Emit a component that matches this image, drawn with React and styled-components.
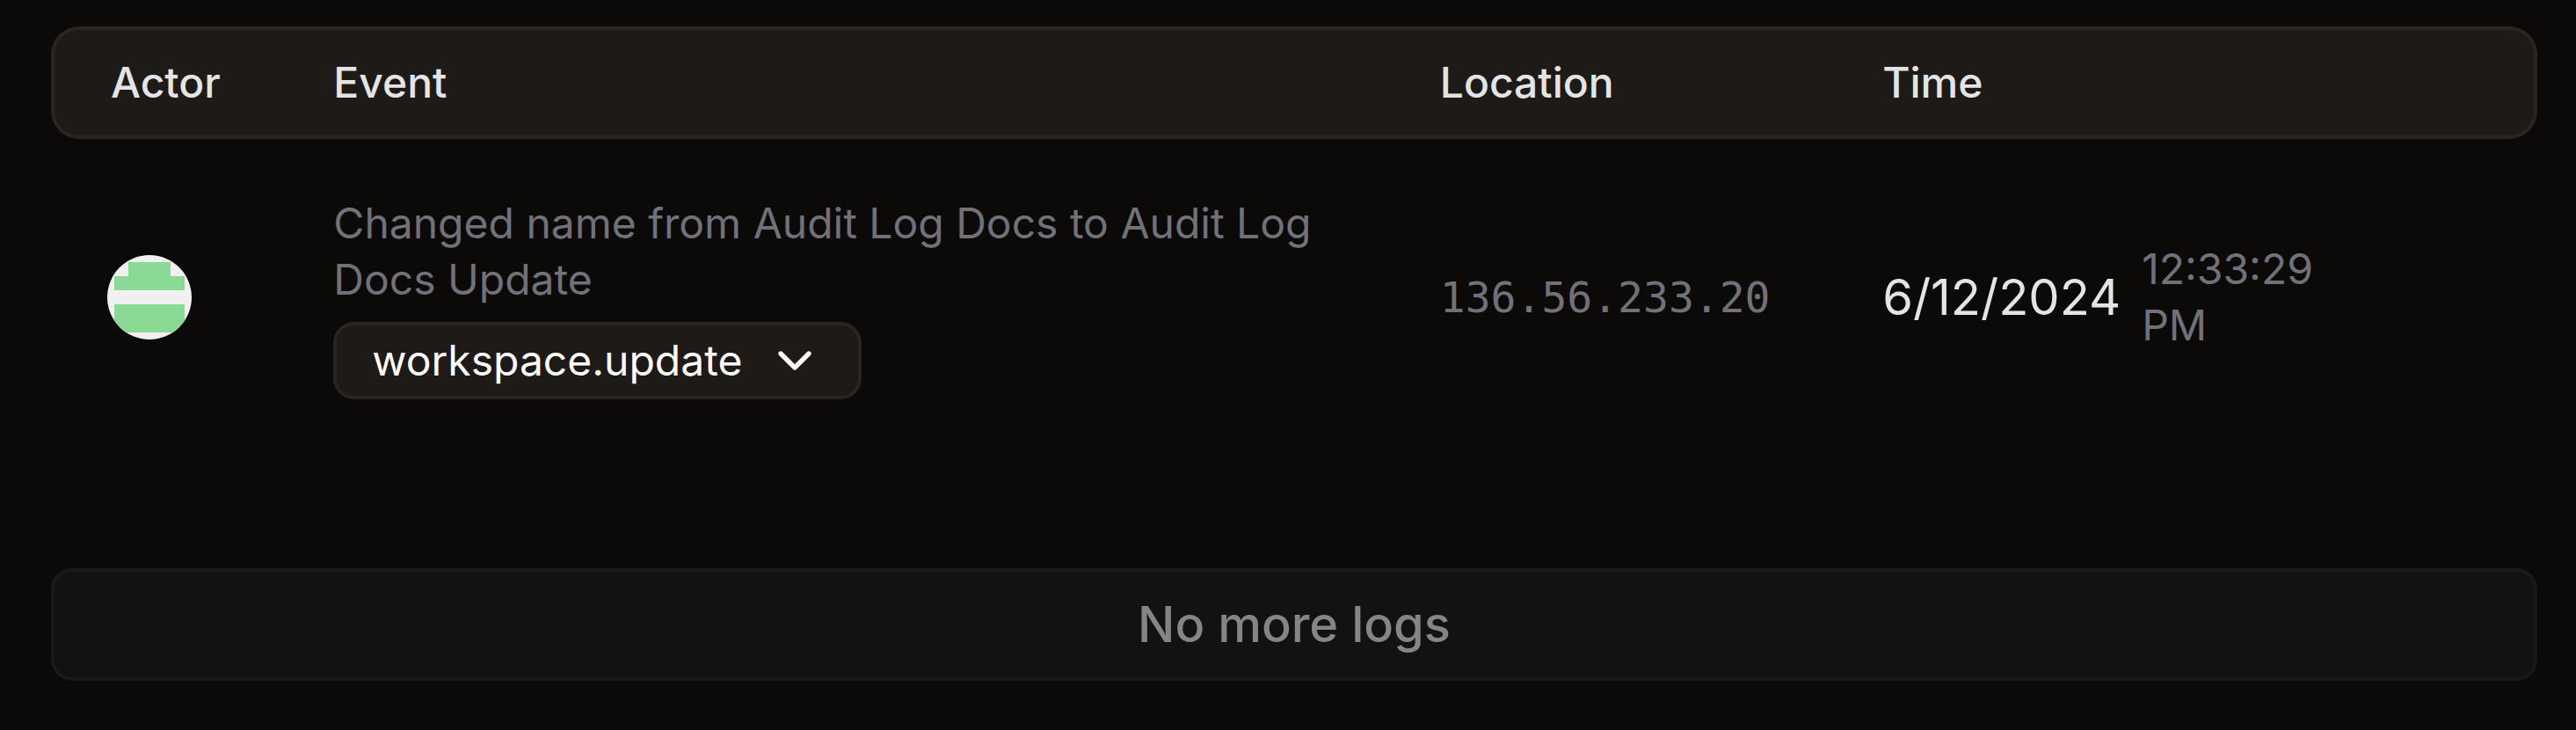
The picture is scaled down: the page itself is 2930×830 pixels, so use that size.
import React, { useState } from 'react';
import styled, { css, createGlobalStyle } from 'styled-components';
import { ChevronDown } from 'lucide-react';

const colors = {
  page: '#0c0a09',
  panel: '#1d1a17',
  border: '#292524',
  text: '#e4e4e7',
  muted: '#71717a',
};

const panelStyle = css`
  background: ${colors.panel};
  border: 4px solid ${colors.border};
`;

const GlobalStyle = createGlobalStyle`
  * {
    box-sizing: border-box;
  }

  body {
    margin: 0;
    background: ${colors.page};
    color: ${colors.text};
    font-family: Inter, 'Liberation Sans', sans-serif;
    font-size: 48px;
    line-height: 64px;
  }
`;

const Root = styled.main`
  display: flex;
  flex-direction: column;
  gap: 128px;
  padding: 30px 44px 56px 58px;
`;

const LogTable = styled.table`
  width: 100%;
  table-layout: fixed;
  border-collapse: separate;
  border-spacing: 0;
`;

const Column = styled.col`
  width: ${({ $width }) => $width};
`;

const HeaderCell = styled.th`
  ${panelStyle};
  height: 128px;
  padding: 0 64px;
  border-left-width: 0;
  border-right-width: 0;
  font-weight: 500;
  text-align: left;

  &:first-child {
    border-left-width: 4px;
    border-radius: 32px 0 0 32px;
  }

  &:last-child {
    border-right-width: 4px;
    border-radius: 0 32px 32px 0;
  }
`;

const Cell = styled.td`
  padding: 64px;
  vertical-align: middle;
`;

const Avatar = styled.svg`
  display: block;
  width: 96px;
  height: 96px;
  border-radius: 50%;
  background: #f0f0f0;
`;

const EventContent = styled.div`
  display: flex;
  flex-direction: column;
  align-items: flex-start;
  gap: 16px;
`;

const Description = styled.p`
  margin: 0;
  color: ${colors.muted};
`;

const EventButton = styled.button`
  ${panelStyle};
  display: flex;
  align-items: center;
  gap: 28px;
  padding: 8px 40px;
  border-radius: 24px;
  color: #ffffff;
  font: inherit;
  cursor: pointer;
`;

const IpAddress = styled.span`
  color: ${colors.muted};
  font-family: 'DejaVu Sans Mono', monospace;
`;

const Timestamp = styled.div`
  display: flex;
  align-items: center;
  gap: 24px;
`;

const DateText = styled.span`
  font-size: 56px;
`;

const TimeText = styled.span`
  color: ${colors.muted};
`;

const LoadMoreButton = styled.button`
  width: 100%;
  padding: 28px 64px;
  background: #141211;
  border: 4px solid #1b1918;
  border-radius: 24px;
  color: #868584;
  font: inherit;
  font-size: 56px;
  font-weight: 500;
`;

const logs = [
  {
    id: 1,
    description: 'Changed name from Audit Log Docs to Audit Log Docs Update',
    event: 'workspace.update',
    location: '136.56.233.20',
    date: '6/12/2024',
    time: '12:33:29 PM',
  },
];

function ActorAvatar() {
  return (
    <Avatar viewBox="0 0 96 96" role="img" aria-label="Actor">
      <path fill="#8ad994" d="M24 8h48v16h16v16H8V24h16zM8 56h80v32H8z" />
    </Avatar>
  );
}

function LogRow({ log }) {
  const [isOpen, setIsOpen] = useState(false);

  return (
    <tr>
      <Cell>
        <ActorAvatar />
      </Cell>
      <Cell>
        <EventContent>
          <Description>{log.description}</Description>
          <EventButton type="button" aria-expanded={isOpen} onClick={() => setIsOpen(!isOpen)}>
            {log.event}
            <ChevronDown size={64} aria-hidden="true" />
          </EventButton>
        </EventContent>
      </Cell>
      <Cell>
        <IpAddress>{log.location}</IpAddress>
      </Cell>
      <Cell>
        <Timestamp>
          <DateText>{log.date}</DateText>
          <TimeText>{log.time}</TimeText>
        </Timestamp>
      </Cell>
      <Cell />
    </tr>
  );
}

export default function App() {
  return (
    <>
      <GlobalStyle />
      <Root>
        <LogTable>
          <colgroup>
            <Column $width="9.1%" />
            <Column $width="44.5%" />
            <Column $width="17.8%" />
            <Column $width="17.8%" />
            <Column />
          </colgroup>
          <thead>
            <tr>
              <HeaderCell scope="col">Actor</HeaderCell>
              <HeaderCell scope="col">Event</HeaderCell>
              <HeaderCell scope="col">Location</HeaderCell>
              <HeaderCell scope="col">Time</HeaderCell>
              <HeaderCell as="td" />
            </tr>
          </thead>
          <tbody>
            {logs.map((log) => (
              <LogRow key={log.id} log={log} />
            ))}
          </tbody>
        </LogTable>
        <LoadMoreButton type="button" disabled>
          No more logs
        </LoadMoreButton>
      </Root>
    </>
  );
}
